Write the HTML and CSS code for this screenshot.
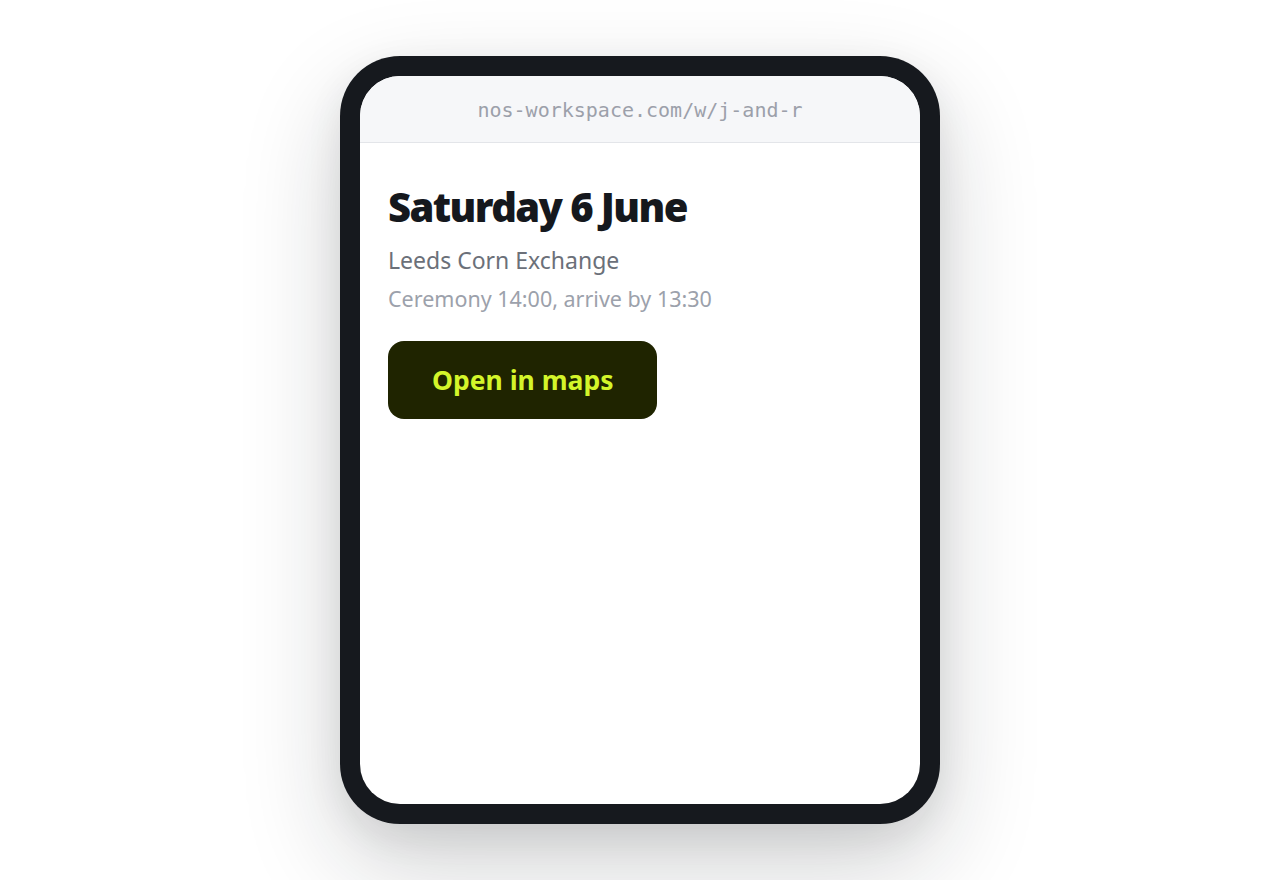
FILE: index.html
```html
<!DOCTYPE html>
<html lang="en">
<head>
<meta charset="utf-8">
<title>Saturday 6 June</title>
<link rel="stylesheet" href="styles.css">
</head>
<body>
<div class="stage">
  <div class="phone">
    <div class="screen">
      <div class="urlbar">nos-workspace.com/w/j-and-r</div>
      <div class="content">
        <h1 class="title">Saturday 6 June</h1>
        <p class="venue">Leeds Corn Exchange</p>
        <p class="time">Ceremony 14:00, arrive by 13:30</p>
        <a class="btn" href="#">Open in maps</a>
      </div>
    </div>
  </div>
</div>
</body>
</html>
```
FILE: styles.css
```css
* { box-sizing: border-box; }
html, body { margin: 0; padding: 0; background: #ffffff; }
body { font-family: "Noto Sans", "Open Sans", sans-serif; }
.stage {
  width: 1280px;
  height: 880px;
  display: flex;
  justify-content: center;
  padding-top: 56px;
}
.phone {
  width: 600px;
  height: 768px;
  background: #16191e;
  border-radius: 60px;
  padding: 20px;
  box-shadow: 0 40px 100px rgba(20, 24, 30, 0.2), 0 12px 36px rgba(20, 24, 30, 0.08);
}
.screen {
  width: 100%;
  height: 100%;
  background: #ffffff;
  border-radius: 40px;
  overflow: hidden;
  display: flex;
  flex-direction: column;
}
.urlbar {
  height: 67px;
  background: #f6f7f9;
  border-bottom: 1px solid #e3e5e9;
  display: flex;
  align-items: center;
  justify-content: center;
  font-family: "DejaVu Sans Mono", "Liberation Mono", monospace;
  font-size: 20px;
  color: #9ca0aa;
  padding-top: 1px;
}
.content {
  padding: 38px 28px;
  display: flex;
  flex-direction: column;
  align-items: flex-start;
}
.title {
  margin: 0;
  font-size: 40px;
  line-height: 52px;
  font-weight: 900;
  letter-spacing: -1.6px;
  color: #15181d;
}
.venue {
  margin: 11px 0 0;
  font-size: 23px;
  line-height: 32px;
  color: #6b7079;
}
.time {
  margin: 9px 0 0;
  font-size: 21.5px;
  line-height: 28px;
  color: #9ca1ab;
}
.btn {
  margin-top: 28px;
  height: 78px;
  padding: 0 44px;
  display: flex;
  align-items: center;
  background: #1f2400;
  color: #d4f52a;
  border-radius: 16px;
  font-size: 26.5px;
  font-weight: 700;
  text-decoration: none;
}
```
